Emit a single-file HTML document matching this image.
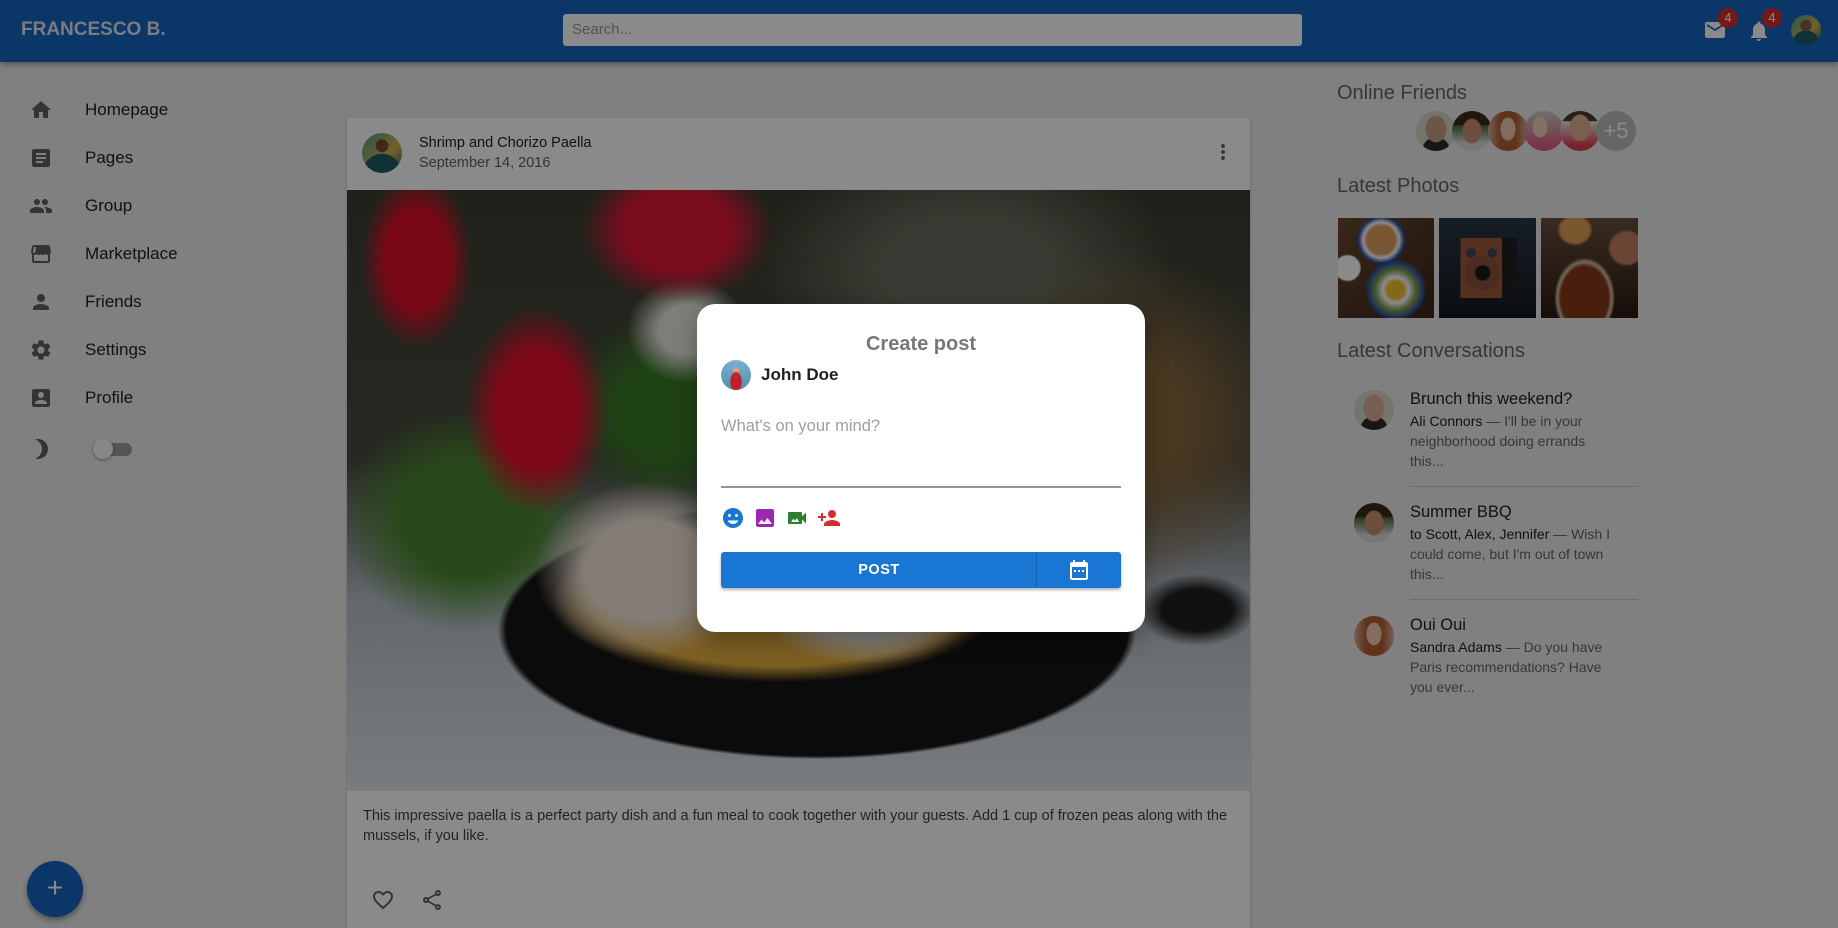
<!DOCTYPE html>
<html><head><meta charset="utf-8"><style>
*{box-sizing:border-box;margin:0;padding:0}
html,body{width:1838px;height:928px;overflow:hidden}
body{background:#ededed;font-family:"Liberation Sans",sans-serif;position:relative;color:#212121}
.abs{position:absolute}
header{position:absolute;left:0;top:0;width:1838px;height:62px;background:#1565c0;box-shadow:0 2px 6px rgba(0,0,0,.4)}
.nav{position:absolute;left:0;font-size:17px;color:#212121}
.nav svg{position:absolute;left:29px;width:24px;height:24px;fill:#616161}
.nav span{position:absolute;left:85px;top:-10px;white-space:nowrap}
.av{position:absolute;border-radius:50%}
.h{position:absolute;font-size:20px;color:#666;white-space:nowrap}
.ph{position:absolute;top:218px;height:100px}
.conv{position:absolute;left:1410px;font-size:14px;color:#666;line-height:20px;width:205px}
.conv b{font-weight:normal;color:#212121;font-size:16.5px;display:block;margin-bottom:2px}
.conv i{font-style:normal;color:#212121}
.hr{position:absolute;left:1410px;width:228px;height:1px;background:#c8c8c8}
</style></head><body>
<header>
 <div class="abs" style="left:21px;top:19px;font-size:19px;font-weight:bold;color:#dfe6f0">FRANCESCO B.</div>
 <div class="abs" style="left:563px;top:14px;width:739px;height:32px;background:#fff;border-radius:3px;font-size:15px;color:#9a9a9a;padding:7px 9px">Search...</div>
 <svg class="abs" style="left:1703px;top:18px" width="24" height="24" viewBox="0 0 24 24"><path fill="#fff" d="M20 4H4c-1.1 0-2 .9-2 2v12c0 1.1.9 2 2 2h16c1.1 0 2-.9 2-2V6c0-1.1-.9-2-2-2zm0 4-8 5-8-5V6l8 5 8-5v2z"/></svg>
 <div class="abs" style="left:1718px;top:8px;width:20px;height:20px;border-radius:50%;background:#d32f2f;color:#fff;font-size:13px;text-align:center;line-height:20px">4</div>
 <svg class="abs" style="left:1747px;top:18px" width="24" height="26" viewBox="0 0 24 24"><path fill="#fff" d="M12 22c1.1 0 2-.9 2-2h-4c0 1.1.9 2 2 2zm6-6v-5c0-3.07-1.64-5.64-4.5-6.32V4c0-.83-.67-1.5-1.5-1.5s-1.5.67-1.5 1.5v.68C7.630 5.36 6 7.92 6 11v5l-2 2v1h16v-1l-2-2z"/></svg>
 <div class="abs" style="left:1762px;top:8px;width:20px;height:20px;border-radius:50%;background:#d32f2f;color:#fff;font-size:13px;text-align:center;line-height:20px">4</div>
 <div class="av" style="left:1791px;top:15px;width:30px;height:30px;background:radial-gradient(circle at 50% 35%,#8a5a40 0 22%,transparent 24%),radial-gradient(circle at 50% 95%,#1d5d66 0 40%,transparent 42%),linear-gradient(135deg,#3aa58f,#d8b050 60%,#1f5a60)"></div>
</header>

<div class="nav" style="top:110px"><svg style="top:-12px" viewBox="0 0 24 24"><path d="M10 20v-6h4v6h5v-8h3L12 3 2 12h3v8z"/></svg><span>Homepage</span></div>
<div class="nav" style="top:158px"><svg style="top:-12px" viewBox="0 0 24 24"><path d="M19 3H5c-1.1 0-2 .9-2 2v14c0 1.1.9 2 2 2h14c1.1 0 2-.9 2-2V5c0-1.1-.9-2-2-2zm-5 14H7v-2h7v2zm3-4H7v-2h10v2zm0-4H7V7h10v2z"/></svg><span>Pages</span></div>
<div class="nav" style="top:206px"><svg style="top:-12px" viewBox="0 0 24 24"><path d="M16 11c1.66 0 2.99-1.34 2.99-3S17.66 5 16 5c-1.66 0-3 1.34-3 3s1.34 3 3 3zm-8 0c1.66 0 2.99-1.34 2.99-3S9.66 5 8 5C6.34 5 5 6.34 5 8s1.34 3 3 3zm0 2c-2.33 0-7 1.17-7 3.5V19h14v-2.5c0-2.33-4.67-3.5-7-3.5zm8 0c-.29 0-.62.02-.97.05 1.16.84 1.97 1.970 1.97 3.45V19h6v-2.5c0-2.33-4.67-3.5-7-3.5z"/></svg><span>Group</span></div>
<div class="nav" style="top:254px"><svg style="top:-12px" viewBox="0 0 24 24"><path d="M21.9 8.89l-1.05-4.37c-.22-.9-1-1.52-1.91-1.52H5.05c-.9 0-1.69.63-1.9 1.52L2.1 8.89c-.24 1.02-.02 2.06.62 2.88.08.11.19.19.28.29V19c0 1.1.9 2 2 2h14c1.1 0 2-.9 2-2v-6.94c.09-.09.2-.18.28-.28.64-.82.87-1.87.62-2.89zM5.02 5h1.97l-.58 4.86c-.08.65-.6 1.14-1.21 1.14-.49 0-.8-.29-.93-.47-.27-.34-.36-.79-.26-1.21L5.02 5zM19 19H5v-6.03c.08.01.15.03.23.03.87 0 1.66-.36 2.24-.95.6.6 1.4.95 2.31.95.87 0 1.65-.36 2.23-.93.59.57 1.39.93 2.29.93.84 0 1.64-.35 2.24-.95.58.59 1.37.95 2.24.95.08 0 .15-.02.23-.03V19z"/></svg><span>Marketplace</span></div>
<div class="nav" style="top:302px"><svg style="top:-12px" viewBox="0 0 24 24"><path d="M12 12c2.21 0 4-1.79 4-4s-1.79-4-4-4-4 1.79-4 4 1.79 4 4 4zm0 2c-2.67 0-8 1.34-8 4v2h16v-2c0-2.66-5.33-4-8-4z"/></svg><span>Friends</span></div>
<div class="nav" style="top:350px"><svg style="top:-12px" viewBox="0 0 24 24"><path d="M19.14 12.94c.04-.3.06-.61.06-.94 0-.32-.02-.64-.07-.94l2.03-1.58a.49.49 0 0 0 .12-.61l-1.92-3.32a.488.488 0 0 0-.59-.22l-2.39.96c-.5-.38-1.03-.7-1.62-.94l-.36-2.54a.484.484 0 0 0-.48-.41h-3.84c-.24 0-.43.17-.47.41l-.36 2.54c-.59.24-1.13.57-1.62.94l-2.39-.96c-.22-.08-.47 0-.59.22L2.74 8.87c-.12.21-.08.47.12.61l2.03 1.58c-.05.3-.09.63-.09.94s.02.64.07.94l-2.03 1.58a.49.49 0 0 0-.12.61l1.92 3.32c.12.22.37.29.59.22l2.39-.96c.5.38 1.03.7 1.62.94l.36 2.54c.05.24.24.41.48.41h3.84c.24 0 .44-.17.47-.41l.36-2.54c.59-.24 1.13-.56 1.62-.94l2.39.96c.22.08.47 0 .59-.22l1.92-3.32c.12-.22.07-.47-.12-.61l-2.01-1.58zM12 15.6c-1.98 0-3.6-1.62-3.6-3.6s1.62-3.6 3.6-3.6 3.6 1.62 3.6 3.6-1.62 3.6-3.6 3.6z"/></svg><span>Settings</span></div>
<div class="nav" style="top:398px"><svg style="top:-12px" viewBox="0 0 24 24"><path d="M3 5v14c0 1.1.89 2 2 2h14c1.1 0 2-.9 2-2V5c0-1.1-.9-2-2-2H5c-1.11 0-2 .9-2 2zm12 4c0 1.66-1.34 3-3 3s-3-1.34-3-3 1.34-3 3-3 3 1.34 3 3zm-9 8c0-2 4-3.1 6-3.1s6 1.1 6 3.1v1H6v-1z"/></svg><span>Profile</span></div>
<svg class="abs" style="left:29px;top:437px" width="24" height="24" viewBox="0 0 24 24"><path fill="#616161" d="M9 2c-1.05 0-2.05.16-3 .46 4.06 1.27 7 5.06 7 9.54 0 4.48-2.94 8.27-7 9.54.95.3 1.95.46 3 .46 5.52 0 10-4.48 10-10S14.52 2 9 2z"/></svg>
<div class="abs" style="left:96px;top:443px;width:36px;height:13px;border-radius:7px;background:#9e9e9e"></div>
<div class="abs" style="left:93px;top:439px;width:20px;height:20px;border-radius:50%;background:#fafafa;box-shadow:0 1px 3px rgba(0,0,0,.4)"></div>

<!-- post card -->
<div class="abs" style="left:347px;top:118px;width:903px;height:810px;background:#fff;box-shadow:0 1px 3px rgba(0,0,0,.2);overflow:hidden">
 <div class="av" style="left:15px;top:15px;width:40px;height:40px;background:radial-gradient(circle at 50% 32%,#7a4a30 0 18%,transparent 20%),radial-gradient(circle at 50% 100%,#1d5d66 0 42%,transparent 44%),linear-gradient(135deg,#3aa58f,#d8b050 60%,#3a6060)"></div>
 <div class="abs" style="left:72px;top:17px;font-size:14.5px;color:#212121">Shrimp and Chorizo Paella</div>
 <div class="abs" style="left:72px;top:37px;font-size:14.5px;color:#616161">September 14, 2016</div>
 <svg class="abs" style="left:864px;top:22px" width="24" height="24" viewBox="0 0 24 24"><path fill="#616161" d="M12 8c1.1 0 2-.9 2-2s-.9-2-2-2-2 .9-2 2 .9 2 2 2zm0 2c-1.1 0-2 .9-2 2s.9 2 2 2 2-.9 2-2-.9-2-2-2zm0 6c-1.1 0-2 .9-2 2s.9 2 2 2 2-.9 2-2-.9-2-2-2z"/></svg>
 <div class="abs" style="left:0;top:72px;width:903px;height:601px;overflow:hidden;background:
  radial-gradient(ellipse 120px 60px at 520px 420px,#f0e8e0 0 50%,transparent 90%),
  radial-gradient(ellipse 140px 110px at 300px 380px,#f2e6da 0 45%,transparent 80%),
  radial-gradient(ellipse 300px 110px at 430px 410px,#e8b040 0 60%,transparent 75%),
  radial-gradient(ellipse 420px 170px at 470px 440px,#151515 0 74%,transparent 76%),
  radial-gradient(ellipse 100px 60px at 850px 420px,#202020 0 35%,transparent 60%),
  radial-gradient(ellipse 70px 110px at 70px 70px,#e0102a 0 45%,transparent 80%),
  radial-gradient(ellipse 90px 130px at 190px 220px,#e8102e 0 45%,transparent 80%),
  radial-gradient(ellipse 120px 90px at 330px 40px,#e01838 0 45%,transparent 80%),
  radial-gradient(ellipse 80px 70px at 340px 140px,#e8e8e0 0 35%,transparent 75%),
  radial-gradient(ellipse 160px 140px at 120px 330px,#4a8a30 0 40%,transparent 80%),
  radial-gradient(ellipse 130px 120px at 320px 220px,#3a7a28 0 40%,transparent 80%),
  radial-gradient(ellipse 220px 220px at 780px 230px,#8a6a40 0 25%,transparent 75%),
  radial-gradient(ellipse 260px 160px at 620px 80px,#6a7060 0 30%,transparent 80%),
  linear-gradient(180deg,#3a3e30 0%,#4a4a40 45%,#b8c0c8 68%,#e0e4ea 100%)"></div>
 <div class="abs" style="left:16px;top:688px;width:870px;font-size:14.5px;line-height:20px;color:#424242">This impressive paella is a perfect party dish and a fun meal to cook together with your guests. Add 1 cup of frozen peas along with the mussels, if you like.</div>
 <svg class="abs" style="left:24px;top:770px" width="24" height="24" viewBox="0 0 24 24"><path fill="#616161" d="M16.5 3c-1.74 0-3.41.81-4.5 2.09C10.91 3.81 9.24 3 7.5 3 4.42 3 2 5.42 2 8.5c0 3.780 3.4 6.86 8.55 11.54L12 21.35l1.45-1.32C18.6 15.36 22 12.28 22 8.5 22 5.42 19.58 3 16.5 3zm-4.4 15.55l-.1.1-.1-.1C7.14 14.24 4 11.39 4 8.5 4 6.5 5.5 5 7.5 5c1.54 0 3.04.99 3.57 2.36h1.87C13.46 5.99 14.96 5 16.5 5c2 0 3.5 1.5 3.5 3.5 0 2.89-3.14 5.74-7.9 10.050z"/></svg>
 <svg class="abs" style="left:73px;top:770px" width="24" height="24" viewBox="0 0 24 24"><path fill="#616161" d="M18 16.08c-.76 0-1.44.3-1.96.77L8.91 12.7c.05-.23.09-.46.09-.7s-.04-.47-.09-.7l7.05-4.11c.54.5 1.25.81 2.04.81 1.66 0 3-1.34 3-3s-1.34-3-3-3-3 1.34-3 3c0 .24.04.47.09.7L8.04 9.81C7.5 9.31 6.79 9 6 9c-1.66 0-3 1.34-3 3s1.34 3 3 3c.79 0 1.5-.31 2.04-.81l7.12 4.16c-.05.21-.08.43-.08.65 0 1.61 1.31 2.92 2.92 2.92s2.92-1.31 2.92-2.92-1.31-2.92-2.92-2.92zM18 4c.55 0 1 .45 1 1s-.45 1-1 1-1-.45-1-1 .45-1 1-1zM6 13c-.55 0-1-.45-1-1s.45-1 1-1 1 .45 1 1-.45 1-1 1zm12 7.02c-.55 0-1-.45-1-1s.45-1 1-1 1 .45 1 1-.45 1-1 1z"/></svg>
</div>

<!-- right column -->
<div class="h" style="left:1337px;top:82px">Online Friends</div>
<div class="av" style="left:1416px;top:111px;width:40px;height:40px;background:radial-gradient(ellipse 11px 14px at 50% 45%,#c8a088 0 90%,transparent 100%),radial-gradient(circle at 50% 100%,#2a2a2a 0 30%,transparent 32%),#d8d8d0"></div>
<div class="av" style="left:1452px;top:111px;width:40px;height:40px;background:radial-gradient(ellipse 10px 13px at 50% 50%,#c89070 0 90%,transparent 100%),linear-gradient(#3a2a1a 35%,#4a6a30 36%,#ddd 80%)"></div>
<div class="av" style="left:1488px;top:111px;width:40px;height:40px;background:radial-gradient(ellipse 8px 12px at 50% 45%,#f0c8b0 0 90%,transparent 100%),linear-gradient(90deg,#d8b0a0,#b06030 30%,#b06030 70%,#d8b0a0)"></div>
<div class="av" style="left:1524px;top:111px;width:40px;height:40px;background:radial-gradient(ellipse 8px 11px at 40% 40%,#f0d0c0 0 90%,transparent 100%),linear-gradient(#c8d0c8,#e06080 85%)"></div>
<div class="av" style="left:1560px;top:111px;width:40px;height:40px;background:radial-gradient(ellipse 11px 14px at 50% 42%,#e0b090 0 90%,transparent 100%),linear-gradient(#4a3a30 25%,#e8e8e8 26%,#e04050 85%)"></div>
<div class="av" style="left:1596px;top:111px;width:40px;height:40px;background:#bdbdbd;color:#fff;font-size:22px;text-align:center;line-height:40px">+5</div>

<div class="h" style="left:1337px;top:175px">Latest Photos</div>
<div class="ph" style="left:1338px;width:96px;background:radial-gradient(circle at 45% 22%,#e0a060 0 15%,#fff 19%,#3050a0 24%,transparent 27%),radial-gradient(circle at 60% 72%,#f4c030 0 9%,#fff 14%,#80a050 22%,#3050a0 30%,transparent 33%),radial-gradient(circle at 10% 50%,#fff 0 12%,transparent 14%),linear-gradient(135deg,#6a4a30,#3a2418)"></div>
<div class="ph" style="left:1439px;width:97px;background:radial-gradient(circle at 45% 55%,#181818 0 9%,#8a5040 11%,#8a5040 22%,transparent 24%),radial-gradient(circle at 33% 35%,#3a4a5a 0 5%,transparent 6%),radial-gradient(circle at 55% 35%,#3a4a5a 0 5%,transparent 6%),linear-gradient(90deg,transparent 22%,#a05a3a 22%,#a05a3a 65%,#202020 65%,#202020 80%,transparent 80%) 0 20px/100% 60px no-repeat,linear-gradient(#2a3848,#14181e)"></div>
<div class="ph" style="left:1541px;width:97px;background:radial-gradient(ellipse 34px 45px at 45% 80%,#8a3818 0 70%,#d0c0a0 80%,transparent 90%),radial-gradient(ellipse 18px 16px at 35% 12%,#e0a050 0 80%,transparent 100%),radial-gradient(circle at 88% 30%,#c08060 0 14%,transparent 17%),linear-gradient(#6a5040,#2a1810)"></div>

<div class="h" style="left:1337px;top:340px">Latest Conversations</div>
<div class="av" style="left:1354px;top:390px;width:40px;height:40px;background:radial-gradient(ellipse 11px 14px at 50% 45%,#d8b098 0 90%,transparent 100%),radial-gradient(circle at 50% 100%,#2a2a2a 0 30%,transparent 32%),#d8d8d0"></div>
<div class="conv" style="top:389px"><b>Brunch this weekend?</b><i>Ali Connors</i> — I'll be in your neighborhood doing errands this...</div>
<div class="hr" style="top:486px"></div>
<div class="av" style="left:1354px;top:503px;width:40px;height:40px;background:radial-gradient(ellipse 10px 13px at 50% 50%,#c89070 0 90%,transparent 100%),linear-gradient(#3a2a1a 35%,#4a6a30 36%,#ddd 80%)"></div>
<div class="conv" style="top:502px"><b>Summer BBQ</b><i>to Scott, Alex, Jennifer</i> — Wish I could come, but I'm out of town this...</div>
<div class="hr" style="top:599px"></div>
<div class="av" style="left:1354px;top:616px;width:40px;height:40px;background:radial-gradient(ellipse 8px 12px at 50% 45%,#f0c8b0 0 90%,transparent 100%),linear-gradient(90deg,#d8b0a0,#b06030 30%,#b06030 70%,#d8b0a0)"></div>
<div class="conv" style="top:615px"><b>Oui Oui</b><i>Sandra Adams</i> — Do you have Paris recommendations? Have you ever...</div>

<div class="av" style="left:27px;top:861px;width:56px;height:56px;background:#1565c0;box-shadow:0 3px 6px rgba(0,0,0,.4);color:#fff;font-size:28px;text-align:center;line-height:54px;font-weight:300">+</div>

<!-- overlay -->
<div class="abs" style="left:0;top:0;width:1838px;height:928px;background:rgba(0,0,0,.46)"></div>

<!-- modal -->
<div class="abs" style="left:697px;top:304px;width:448px;height:328px;background:#fff;border-radius:18px;box-shadow:0 8px 24px rgba(0,0,0,.3)">
 <div class="abs" style="left:0;top:29px;width:448px;text-align:center;font-size:20px;font-weight:bold;color:#777">Create post</div>
 <div class="av" style="left:24px;top:56px;width:30px;height:30px;background:radial-gradient(ellipse 6px 10px at 50% 72%,#c0202a 0 90%,transparent 100%),radial-gradient(circle at 50% 35%,#e0a080 0 12%,transparent 14%),linear-gradient(#7ab0d0,#5090b0)"></div>
 <div class="abs" style="left:64px;top:61px;font-size:17px;font-weight:bold;color:#212121">John Doe</div>
 <div class="abs" style="left:24px;top:113px;font-size:16.5px;color:#9e9e9e">What's on your mind?</div>
 <div class="abs" style="left:24px;top:182px;width:400px;height:1.5px;background:#949494"></div>
 <svg class="abs" style="left:24px;top:202px" width="24" height="24" viewBox="0 0 24 24"><path fill="#1976d2" d="M12 2C6.48 2 2 6.48 2 12s4.48 10 10 10 10-4.48 10-10S17.52 2 12 2zM8.5 8c.83 0 1.5.67 1.5 1.5S9.33 11 8.5 11 7 10.33 7 9.5 7.67 8 8.5 8zm7 0c.83 0 1.5.67 1.5 1.5s-.67 1.5-1.5 1.5S14 10.33 14 9.5s.67-1.5 1.5-1.5zM12 18c-2.5 0-4.5-1.5-5.3-3.5h10.6c-.8 2-2.8 3.5-5.3 3.5z"/></svg>
 <svg class="abs" style="left:56px;top:202px" width="24" height="24" viewBox="0 0 24 24"><path fill="#9c27b0" d="M21 19V5c0-1.1-.9-2-2-2H5c-1.1 0-2 .9-2 2v14c0 1.1.9 2 2 2h14c1.1 0 2-.9 2-2zM8.5 13.5l2.5 3.01L14.5 12l4.5 6H5l3.5-4.5z"/></svg>
 <svg class="abs" style="left:88px;top:202px" width="24" height="24" viewBox="0 0 24 24"><path fill="#2e7d32" d="M17 10.5V7c0-.55-.45-1-1-1H4c-.55 0-1 .45-1 1v10c0 .55.45 1 1 1h12c.55 0 1-.45 1-1v-3.5l4 4v-11l-4 4zM14 16H6l2.5-3.2 1.5 1.9 2-2.6 2 3.9z" /></svg>
 <svg class="abs" style="left:120px;top:202px" width="24" height="24" viewBox="0 0 24 24"><path fill="#d32f2f" d="M15 12c2.21 0 4-1.79 4-4s-1.79-4-4-4-4 1.79-4 4 1.79 4 4 4zm-9-2V7H4v3H1v2h3v3h2v-3h3v-2H6zm9 4c-2.67 0-8 1.34-8 4v2h16v-2c0-2.66-5.33-4-8-4z"/></svg>
 <div class="abs" style="left:24px;top:248px;width:400px;height:36px;background:#1976d2;border-radius:3px;box-shadow:0 2px 3px rgba(0,0,0,.3)">
  <div class="abs" style="left:0;top:0;width:316px;height:36px;line-height:36px;text-align:center;color:#fff;font-size:14.5px;font-weight:bold;letter-spacing:.5px">POST</div>
  <div class="abs" style="left:315px;top:0;width:1px;height:36px;background:#1560b0"></div>
  <svg class="abs" style="left:346px;top:6px" width="24" height="24" viewBox="0 0 24 24"><path fill="#fff" d="M19 4h-1V2h-2v2H8V2H6v2H5c-1.11 0-2 .9-2 2v14c0 1.1.89 2 2 2h14c1.1 0 2-.9 2-2V6c0-1.1-.9-2-2-2zm0 16H5V9h14v11zM7 12h2v2H7zm4 0h2v2h-2zm4 0h2v2h-2z"/></svg>
 </div>
</div>
</body></html>
